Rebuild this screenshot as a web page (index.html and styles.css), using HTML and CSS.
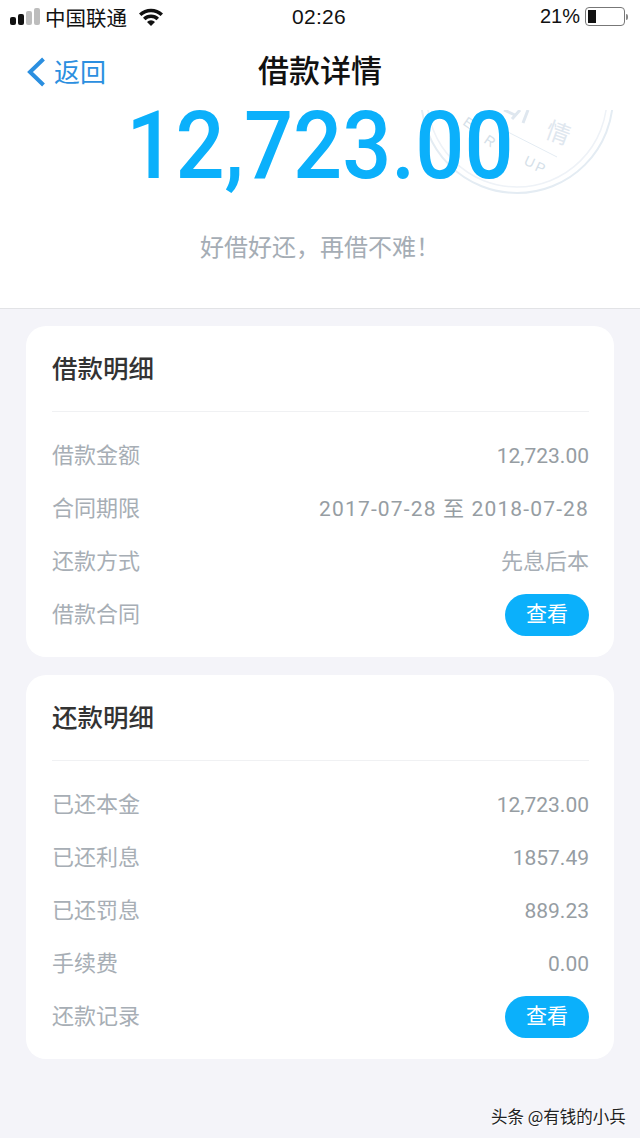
FILE: index.html
```html
<!DOCTYPE html>
<html lang="zh-CN">
<head>
    <meta charset="UTF-8">
    <meta name="viewport" content="width=device-width, initial-scale=1.0">
    <title>借款详情</title>
    <link rel="stylesheet" href="styles.css">
</head>
<body>
    <header class="top">
        <div class="status">
            <div class="status-left">
                <span class="signal"><i class="on"></i><i class="on"></i><i></i><i></i></span>
                <span class="carrier">中国联通</span>
                <svg class="wifi" width="24" height="18" viewBox="0 0 24 18">
                    <path d="M0 5.6a17 17 0 0 1 24 0l-2.4 2.5a13.6 13.6 0 0 0-19.2 0z" fill="#111"/>
                    <path d="M4 9.8a11.4 11.4 0 0 1 16 0l-2.5 2.5a8 8 0 0 0-11 0z" fill="#111"/>
                    <path d="M8 14a5.6 5.6 0 0 1 8 0l-4 4z" fill="#111"/>
                </svg>
            </div>
            <span class="clock">02:26</span>
            <div class="status-right">
                <span class="percent">21%</span>
                <span class="battery"><i></i></span>
                <span class="battery-tip"></span>
            </div>
        </div>
        <nav class="navbar">
            <a class="back">
                <svg width="22" height="32" viewBox="0 0 22 32">
                    <path d="M18.5 3 L5 16 L18.5 29" fill="none" stroke="#2b8fe0" stroke-width="4"/>
                </svg>
                <span>返回</span>
            </a>
            <h1>借款详情</h1>
        </nav>
    </header>

    <section class="hero">
        <svg class="stamp" width="200" height="90" viewBox="0 0 200 90">
            <circle cx="97" cy="-13" r="96" fill="none" stroke="#e4ecf3" stroke-width="2"/>
            <circle cx="97" cy="-13" r="90" fill="none" stroke="#eef2f7" stroke-width="1.5"/>
            <path d="M80 18 L137 47" stroke="#e4ecf3" stroke-width="1"/>
            <path d="M84 0 L95 5 M100 0 L92 9 M108 0 L103 13" stroke="#dfe7ef" stroke-width="3" fill="none"/>
            <text x="124" y="27" class="stamp-big" transform="rotate(20 124 27)">情</text>
            <text x="42" y="14" class="stamp-small" transform="rotate(35 42 14)">E</text>
            <text x="63" y="32" class="stamp-small" transform="rotate(35 63 32)">R</text>
            <text x="103" y="54" class="stamp-small" transform="rotate(25 103 54)">U</text>
            <text x="114" y="60" class="stamp-small" transform="rotate(25 114 60)">P</text>
        </svg>
        <div class="amount">12,723.00</div>
        <p class="slogan">好借好还，再借不难！</p>
    </section>

    <main class="content">
        <section class="card">
            <h2>借款明细</h2>
            <div class="rows">
                <div class="row"><span>借款金额</span><span class="num">12,723.00</span></div>
                <div class="row"><span>合同期限</span><span class="num date">2017-07-28 至 2018-07-28</span></div>
                <div class="row"><span>还款方式</span><span>先息后本</span></div>
                <div class="row"><span>借款合同</span><button class="view">查看</button></div>
            </div>
        </section>
        <section class="card">
            <h2>还款明细</h2>
            <div class="rows">
                <div class="row"><span>已还本金</span><span class="num">12,723.00</span></div>
                <div class="row"><span>已还利息</span><span class="num">1857.49</span></div>
                <div class="row"><span>已还罚息</span><span class="num">889.23</span></div>
                <div class="row"><span>手续费</span><span class="num">0.00</span></div>
                <div class="row"><span>还款记录</span><button class="view">查看</button></div>
            </div>
        </section>
        <div class="mark">头条 @有钱的小兵</div>
    </main>
</body>
</html>
```
FILE: styles.css
```css
* {
    box-sizing: border-box;
}
html, body {
    margin: 0;
    padding: 0;
}
body {
    width: 640px;
    height: 1138px;
    overflow: hidden;
    background-color: #f4f4f9;
    font-family: "Noto Sans CJK SC", "Noto Sans", sans-serif;
}
.top {
    background-color: white;
    height: 110px;
}
.status {
    height: 36px;
    display: flex;
    align-items: center;
    justify-content: space-between;
    padding: 0 12px 3px 10px;
    color: #111;
    font-size: 20.5px;
    position: relative;
}
.status-left, .status-right {
    display: flex;
    align-items: center;
}
.signal {
    display: flex;
    align-items: flex-end;
    gap: 2px;
    margin-right: 5px;
}
.signal i {
    display: block;
    width: 6px;
    border-radius: 2px;
    background-color: #bdbdbd;
}
.signal i:nth-child(1) { height: 8px; }
.signal i:nth-child(2) { height: 11px; }
.signal i:nth-child(3) { height: 14px; }
.signal i:nth-child(4) { height: 17px; }
.signal i.on {
    background-color: #111;
}
.wifi {
    margin-left: 12px;
}
.clock {
    position: absolute;
    left: 292px;
    font-family: "Liberation Sans", sans-serif;
    font-size: 21px;
    letter-spacing: 0.3px;
}
.percent {
    font-family: "Liberation Sans", sans-serif;
    font-size: 20px;
    margin-right: 5px;
}
.battery {
    width: 40px;
    height: 19px;
    border: 1.5px solid #777;
    border-radius: 4px;
    padding: 2px;
    display: block;
}
.battery i {
    display: block;
    width: 8px;
    height: 100%;
    background-color: #111;
}
.battery-tip {
    width: 2px;
    height: 6px;
    margin-left: 1px;
    background-color: #888;
    border-radius: 0 2px 2px 0;
}
.navbar {
    height: 74px;
    position: relative;
    display: flex;
    align-items: center;
    justify-content: center;
}
.navbar h1 {
    margin: 0 0 10px;
    font-size: 31px;
    font-weight: 500;
    color: #111;
}
.back {
    position: absolute;
    left: 25px;
    top: 16px;
    display: flex;
    align-items: center;
    gap: 7px;
    color: #2b8fe0;
    font-size: 26px;
}
.back span {
    padding-bottom: 2px;
}
.hero {
    height: 199px;
    background-color: white;
    border-bottom: 1px solid #e2e3e6;
    position: relative;
    text-align: center;
}
.stamp {
    position: absolute;
    left: 420px;
    top: 0;
}
.stamp-big {
    font-size: 24px;
    fill: #dfe7ef;
}
.stamp-small {
    font-size: 14px;
    fill: #d5dfe9;
    font-family: "Liberation Sans", sans-serif;
}
.amount {
    position: relative;
    font-family: Roboto, sans-serif;
    font-weight: 500;
    font-size: 95px;
    line-height: 72px;
    color: #0bb0fb;
    transform: scaleX(0.91);
}
.slogan {
    position: relative;
    margin: 48px 0 0;
    font-size: 24px;
    line-height: 32px;
    color: #a5adb5;
}
.content {
    padding: 17px 26px 0 26px;
    position: relative;
}
.card {
    background-color: white;
    border-radius: 20px;
    padding: 0 25px 0 26px;
    margin-bottom: 18px;
}
.card h2 {
    margin: 0;
    height: 86px;
    padding-bottom: 4px;
    line-height: 82px;
    border-bottom: 1px solid #f0f1f3;
    font-size: 25.5px;
    font-weight: 500;
    color: #333;
}
.rows {
    padding: 17px 0 16px;
}
.row {
    height: 53px;
    display: flex;
    align-items: center;
    justify-content: space-between;
    font-size: 22px;
    color: #a7aeb5;
}
.row span {
    padding-bottom: 6px;
}
.row .num {
    font-family: Roboto, "Noto Sans CJK SC", sans-serif;
    font-size: 21px;
    line-height: 30px;
    padding-bottom: 0;
    color: #969da3;
}
.row .date {
    letter-spacing: 1.15px;
}
.view {
    width: 84px;
    height: 42px;
    border: none;
    border-radius: 21px;
    background-color: #0bb0fb;
    color: white;
    font-family: inherit;
    font-size: 21px;
    padding: 0 0 5px;
}
.mark {
    position: absolute;
    left: 491px;
    top: 795px;
    font-size: 16.5px;
    color: #222;
    white-space: nowrap;
    text-shadow: 1px 1px 0 white;
}
```
